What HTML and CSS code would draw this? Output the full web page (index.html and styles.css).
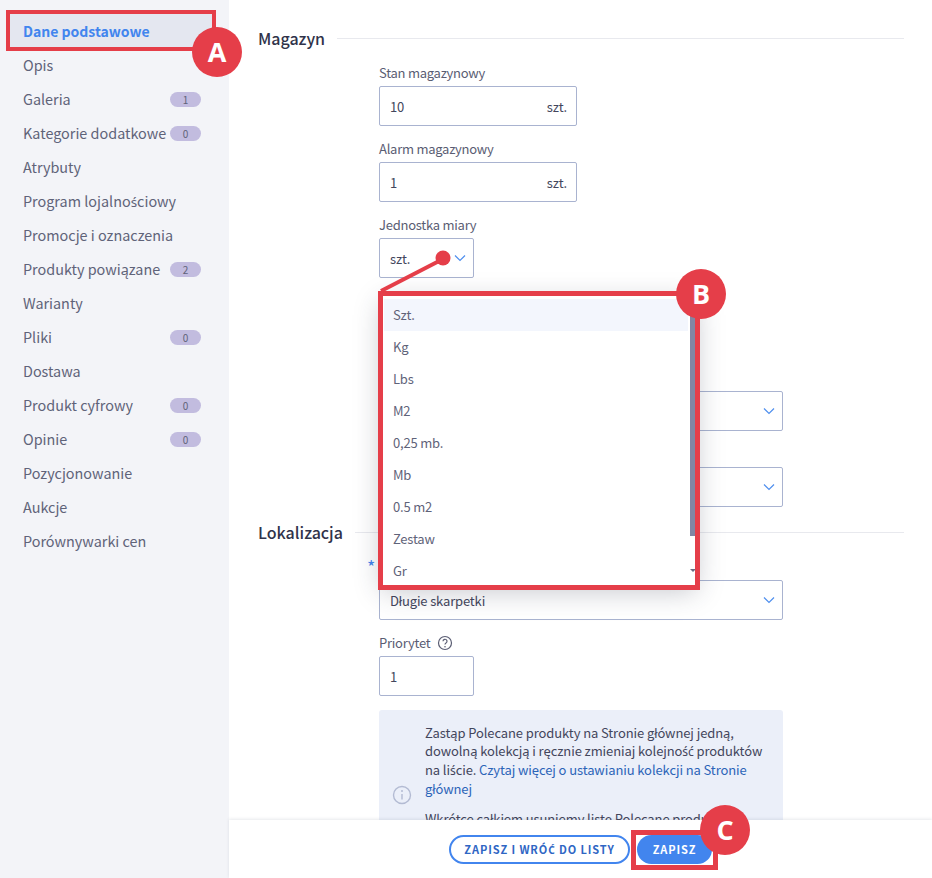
FILE: index.html
```html
<!DOCTYPE html>
<html lang="pl">
<head>
<meta charset="utf-8">
<title>Produkt</title>
<link rel="stylesheet" href="styles.css">
</head>
<body>
<div class="app">
  <nav class="side">
    <a class="item active">Dane podstawowe</a>
    <a class="item">Opis</a>
    <a class="item">Galeria<span class="badge">1</span></a>
    <a class="item">Kategorie dodatkowe<span class="badge">0</span></a>
    <a class="item">Atrybuty</a>
    <a class="item"><span>Program lojalno<span class="pl">ś</span>ciowy</span></a>
    <a class="item">Promocje i oznaczenia</a>
    <a class="item">Produkty powiązane<span class="badge">2</span></a>
    <a class="item">Warianty</a>
    <a class="item">Pliki<span class="badge">0</span></a>
    <a class="item">Dostawa</a>
    <a class="item">Produkt cyfrowy<span class="badge">0</span></a>
    <a class="item">Opinie<span class="badge">0</span></a>
    <a class="item">Pozycjonowanie</a>
    <a class="item">Aukcje</a>
    <a class="item">Porównywarki cen</a>
  </nav>
  <main class="main">
    <section class="section sec-mag">
      <h2 class="sec-title"><span>Magazyn</span></h2>
      <div class="fields">
        <div class="field">
          <label class="label">Stan magazynowy</label>
          <div class="input w198"><span>10</span><span class="unit">szt.</span></div>
        </div>
        <div class="field">
          <label class="label">Alarm magazynowy</label>
          <div class="input w198"><span>1</span><span class="unit">szt.</span></div>
        </div>
        <div class="field">
          <label class="label">Jednostka miary</label>
          <div class="input w95 sel"><span>szt.</span>
            <svg class="chev" viewBox="0 0 12 8"><path d="M1 1.5l5 5 5-5"/></svg>
          </div>
        </div>
        <div class="field hidden-a">
          <div class="input w404 sel"><span></span>
            <svg class="chev" viewBox="0 0 12 8"><path d="M1 1.5l5 5 5-5"/></svg>
          </div>
        </div>
        <div class="field hidden-b">
          <div class="input w404 sel"><span></span>
            <svg class="chev" viewBox="0 0 12 8"><path d="M1 1.5l5 5 5-5"/></svg>
          </div>
        </div>
      </div>
    </section>
    <section class="section sec-lok">
      <h2 class="sec-title"><span>Lokalizacja</span></h2>
      <div class="fields">
        <div class="field f-kol">
          <label class="label"><i class="req">*</i></label>
          <div class="input w404 sel"><span>Długie skarpetki</span>
            <svg class="chev" viewBox="0 0 12 8"><path d="M1 1.5l5 5 5-5"/></svg>
          </div>
        </div>
        <div class="field">
          <label class="label">Priorytet
            <svg class="help" viewBox="0 0 16 16"><circle cx="8" cy="8" r="6.5"/><path d="M6 6.3a2 2 0 1 1 3 1.7c-.7.4-1 .8-1 1.6"/><circle class="dot" cx="8" cy="11.7" r=".8"/></svg>
          </label>
          <div class="input w95"><span>1</span></div>
        </div>
        <div class="info">
          <svg class="info-icon" viewBox="0 0 20 20"><circle cx="10" cy="10" r="8.5"/><path d="M10 9v5.5"/><circle class="dot" cx="10" cy="6" r="1"/></svg>
          <div class="info-text">
            <p>Zastąp Polecane produkty na Stronie głównej jedną, dowolną kolekcją i ręcznie zmieniaj kolejno<span class="pl">ść</span> produktów na li<span class="pl">ś</span>cie. <a class="link">Czytaj więcej o ustawianiu kolekcji na Stronie głównej</a></p>
            <p>Wkrótce całkiem usuniemy listę Polecane produkty. Dlatego już teraz</p>
          </div>
        </div>
      </div>
    </section>
    <footer class="bar">
      <button class="btn outline">ZAPISZ I WRÓ<span class="pl">Ć</span> DO LISTY</button>
      <button class="btn solid">ZAPISZ</button>
    </footer>
  </main>

  <div class="dropdown">
    <div class="options">
      <div class="opt cur">Szt.</div>
      <div class="opt">Kg</div>
      <div class="opt">Lbs</div>
      <div class="opt">M2</div>
      <div class="opt">0,25 mb.</div>
      <div class="opt">Mb</div>
      <div class="opt">0.5 m2</div>
      <div class="opt">Zestaw</div>
      <div class="opt">Gr</div>
    </div>
    <div class="scroll"><div class="thumb"></div><div class="arrow"></div></div>
  </div>

  <div class="mark mark-a"></div>
  <div class="mark mark-b"></div>
  <div class="mark mark-c"></div>
  <svg class="pointer" viewBox="0 0 80 50"><path d="M3 46L65 14"/><circle cx="65" cy="13" r="7.5"/></svg>
  <div class="pin pin-a">A</div>
  <div class="pin pin-b">B</div>
  <div class="pin pin-c">C</div>
</div>
</body>
</html>
```
FILE: styles.css
```css
* { box-sizing: border-box; }
html, body { margin: 0; padding: 0; }
body {
  font-family: "Noto Sans CJK JP", "Noto Sans", sans-serif;
  font-size: 13px;
  color: #4d5068;
  background: #fff;
}
.pl { font-family: "Noto Sans", sans-serif; font-size: .93em; }
.app {
  position: relative;
  display: flex;
  width: 932px;
  height: 878px;
  overflow: hidden;
}
.side {
  flex: 0 0 229px;
  background: #f3f4f8;
  padding: 14px 0 0 10px;
}
.item {
  display: flex;
  align-items: center;
  justify-content: space-between;
  width: 202px;
  height: 34px;
  padding: 0 11px 0 13px;
  font-size: 14.4px;
  line-height: 32px;
  color: #5f6379;
  white-space: nowrap;
}
.item.active {
  background: #e4e7f0;
  color: #4285ee;
  font-size: 14px;
  font-weight: 700;
}
.badge {
  flex: none;
  width: 31px;
  height: 15px;
  border-radius: 8px;
  background: #c2bcdf;
  color: #5f6379;
  font-size: 10px;
  line-height: 15px;
  text-align: center;
}
.main {
  position: relative;
  flex: 1;
  padding: 0 28px 0 29px;
}
.section { display: block; }
.sec-mag { padding-top: 27px; height: 521px; }
.sec-title {
  display: flex;
  align-items: center;
  gap: 12px;
  margin: 0;
  height: 22px;
  font-size: 16px;
  font-weight: 500;
  color: #30334a;
  line-height: 22px;
}
.sec-title::after {
  content: "";
  flex: 1;
  height: 1px;
  margin-top: 0;
  background: #e8e9ee;
}
.fields {
  margin-left: 121px;
  padding-top: 1px;
}
.label {
  display: flex;
  align-items: center;
  gap: 7px;
  height: 26px;
  font-size: 13px;
  letter-spacing: -.25px;
  color: #5a5d73;
  margin-top: 10px;
  line-height: 26px;
}
.input {
  display: flex;
  align-items: center;
  justify-content: space-between;
  height: 40px;
  padding: 0 9px 0 10px;
  border: 1px solid #a9b3d0;
  border-radius: 2px;
  background: #fff;
  font-size: 13px;
  letter-spacing: -.15px;
  color: #43465c;
}
.w198 { width: 198px; }
.w95 { width: 95px; }
.w404 { width: 404px; }
.unit { color: #43465c; }
.sel { padding-right: 7px; }
.chev {
  width: 12px;
  height: 8px;
  fill: none;
  stroke: #4f8fee;
  stroke-width: 1.2;
}
.hidden-a { margin-top: 113px; }
.hidden-b { margin-top: 36px; }
.f-kol .label { margin-top: 10px; position: relative; }
.req {
  position: absolute;
  left: -12px;
  top: -1px;
  font-size: 18px;
  color: #4285ee;
  font-style: normal;
}
.help {
  width: 16px;
  height: 16px;
  fill: none;
  stroke: #5a5d73;
  stroke-width: 1.2;
}
.dot { fill: currentColor; stroke: none; }
.help .dot { fill: #5a5d73; }
.info {
  position: relative;
  width: 404px;
  margin-top: 14px;
  padding: 14px 20px 0 46px;
  background: #ebeff9;
  border-radius: 3px;
  height: 140px;
  font-size: 13px;
  letter-spacing: -.1px;
  line-height: 18px;
  color: #43465c;
}
.info p { margin: 0 0 12px; }
.info-icon {
  position: absolute;
  left: 13px;
  top: 75px;
  width: 20px;
  height: 20px;
  fill: none;
  stroke: #b3bbd3;
  stroke-width: 1.4;
}
.info-icon .dot { fill: #b3bbd3; }
.link { color: #2b64b8; }
.bar {
  position: absolute;
  left: 0;
  right: 0;
  bottom: 0;
  height: 58px;
  display: flex;
  justify-content: center;
  align-items: flex-start;
  gap: 7px;
  padding: 15px 0 0 0;
  background: #fff;
  box-shadow: 0 -1px 3px rgba(60, 70, 100, .12);
}
.btn {
  height: 29px;
  border-radius: 15px;
  font-family: inherit;
  font-size: 11px;
  font-weight: 700;
  letter-spacing: .9px;
  padding: 0;
  line-height: 1;
  white-space: nowrap;
}
.outline {
  width: 181px;
  background: #fff;
  border: 2px solid #4285ee;
  color: #2f66c4;
}
.solid {
  width: 75px;
  background: #4285ee;
  border: 0;
  color: #fff;
}
.dropdown {
  position: absolute;
  left: 382px;
  top: 296px;
  width: 314px;
  height: 289px;
  background: #fff;
  box-shadow: 0 6px 26px rgba(40, 45, 70, .28);
  display: flex;
}
.options { flex: 1; padding: 3px 2px 0 2px; overflow: hidden; }
.opt {
  height: 32px;
  line-height: 32px;
  padding-left: 9px;
  font-size: 13px;
  letter-spacing: -.2px;
  color: #5f6379;
}
.opt.cur { background: #f3f6fd; }
.scroll { position: relative; flex: 0 0 6px; }
.thumb { position: absolute; left: 0; right: 0; top: 0; height: 240px; background: #8286a3; }
.arrow {
  position: absolute;
  left: 0;
  bottom: 13px;
  border-left: 3px solid transparent;
  border-right: 3px solid transparent;
  border-top: 3px solid #6a6d84;
}
.mark { position: absolute; border-style: solid; border-color: #e53e49; background: transparent; }
.mark-a { left: 6px; top: 10px; width: 210px; height: 41px; border-width: 4.5px; }
.mark-b { left: 378px; top: 291px; width: 322px; height: 299px; border-width: 5px; }
.mark-c { left: 631px; top: 830px; width: 87px; height: 40px; border-width: 5px; }
.pointer {
  position: absolute;
  left: 378px;
  top: 245px;
  width: 80px;
  height: 50px;
  fill: #e53e49;
  stroke: none;
}
.pointer path { stroke: #e53e49; stroke-width: 4; fill: none; }
.pin {
  position: absolute;
  width: 50px;
  height: 50px;
  border-radius: 50%;
  background: #e53e49;
  color: #fff;
  font-family: "Open Sans", sans-serif;
  font-size: 27px;
  font-weight: 700;
  line-height: 50px;
  text-align: center;
}
.pin-a { left: 192px; top: 27px; }
.pin-b { left: 676px; top: 269px; }
.pin-c { left: 700px; top: 805px; }
```
